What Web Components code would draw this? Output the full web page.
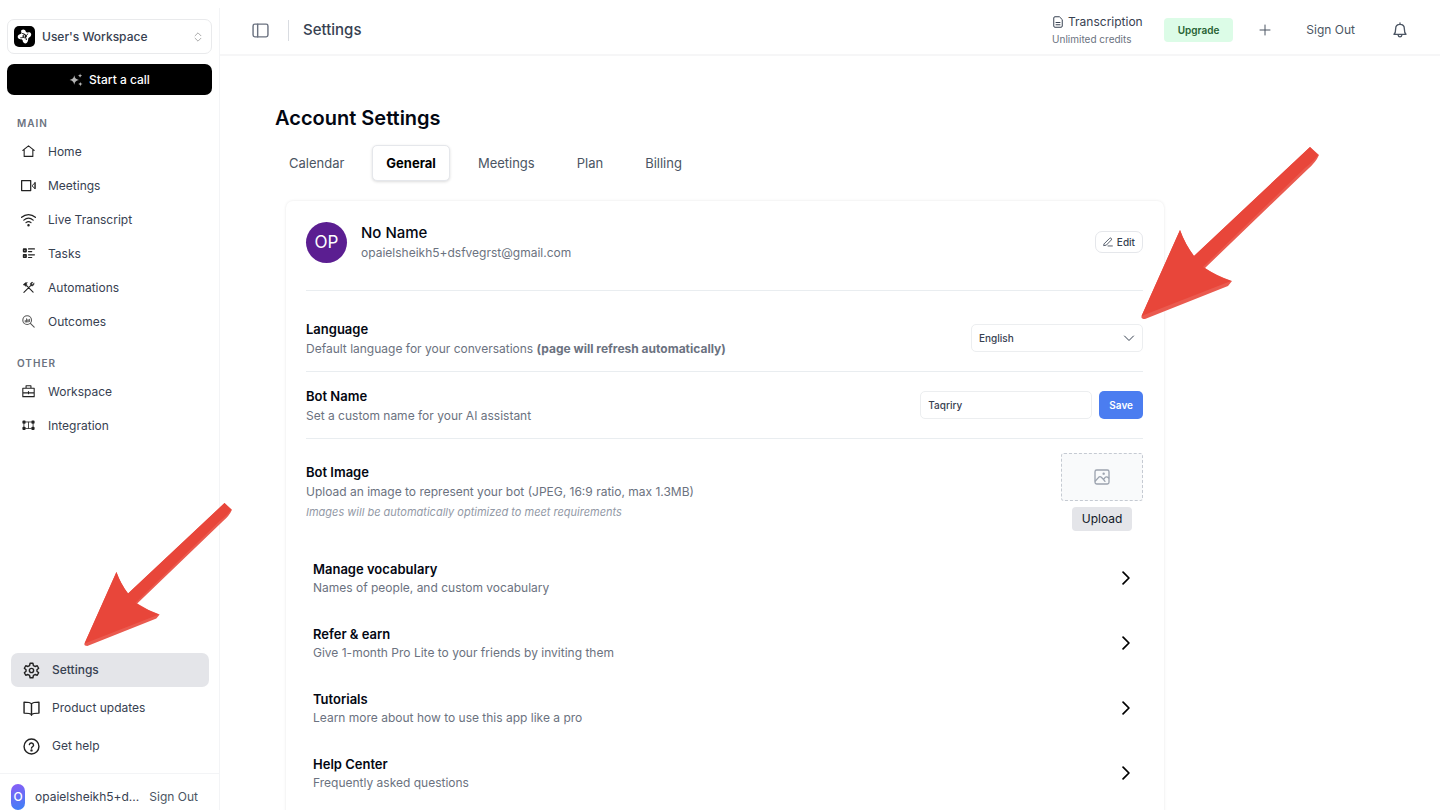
<!DOCTYPE html>
<html lang="en">
<head>
<meta charset="UTF-8">
<meta name="viewport" content="width=device-width, initial-scale=1.0">
<title>Settings</title>
<style>
    html, body {
        height: 100%;
        margin: 0;
    }
    body {
        --text: #374151;
        --muted: #6b7280;
        --heading: #030712;
        --line: #f1f2f4;
        font-family: Inter, "Liberation Sans", sans-serif;
        font-size: 12px;
        line-height: 20px;
        color: var(--text);
        background: #fff;
        overflow: hidden;
    }
</style>
</head>
<body>
<app-shell>
    <app-sidebar slot="sidebar"></app-sidebar>
    <top-bar slot="header"></top-bar>
    <account-settings></account-settings>
</app-shell>

<script>
const ICONS = {
    chevrons: '<path d="m5 9 7-7 7 7M5 15l7 7 7-7"/>',
    sparkles: '<g fill="currentColor" stroke="none"><path d="M9 4c1 5 3 7 8 8-5 1-7 3-8 8-1-5-3-7-8-8 5-1 7-3 8-8z"/><path d="M19 1c.4 2.300 1.200 3.200 3.500 3.600C20.200 5 19.400 6 19 8.200c-.4-2.200-1.200-3.200-3.500-3.600C17.800 4.200 18.600 3.300 19 1zM19.500 15c.4 2.500 1.400 3.500 4 4-2.600.5-3.600 1.500-4 4-.4-2.500-1.400-3.500-4-4 2.600-.5 3.600-1.500 4-4z"/></g>',
    home: '<path d="M1.500 10 12 1.500 22.500 10M4 8.500V21h16V8.500"/>',
    video: '<path d="M1 4h14.500v16H1z"/><path d="M18 12l4.500-4.500v9zM22.500 7v10" stroke-width="1.500"/>',
    wifi: '<path d="M1 8.500c6.500-6 15.500-6 22 0M4.500 13c4.500-4 10.500-4 15 0M8 17c2.500-2 5.500-2 8 0"/><circle cx="12" cy="21" r="1" fill="currentColor"/>',
    tasks: '<path d="M3 4h4.500v4.500H3zM3 14.500h4.500V19H3z" stroke-width="3"/><path d="M12 3.500h11M12 8.500h6M12 14.500h11M12 19.500h6"/>',
    tools: '<path d="m9 9 11.500 11.500M3.500 21 16 8.500"/><path d="M2.500 6.500 6.500 3h3.500L7.500 5.500 9.500 7.500 7 10 5 8zM22 4.500l-3 2.500-1.500-1.500L20 2.500c-3-.5-5 1.500-4.500 4l2 2.500c2.500.5 5-1.500 4.500-4.500z" fill="currentColor" stroke-width="1"/>',
    insight: '<circle cx="9.500" cy="9.500" r="8"/><path d="m15.500 15.500 7 7M6 10v3M8.500 7v6M11 9v4M13.500 8v4"/>',
    briefcase: '<path d="M1.500 6h21v15.500h-21zM7.500 6V1.500h9V6M1.500 14.500h21M12 12v4"/>',
    flow: '<g stroke-width="3.500"><path d="M2.500 4.500h2.500V7H2.500zM19 4.500h2.500V7H19zM2.500 16h2.500v2.500H2.500zM19 16h2.500v2.500H19z"/></g><path d="M7 5.500h10M7 17.500h10M3.500 9v5M20.500 9v5M12 6v11" stroke-width="1.500"/>',
    gear: '<circle cx="12" cy="12" r="3"/><path d="M10 1.800h4l.7 3.200 2.300 1.300 3.100-1 2 3.500-2.400 2.200v2l2.400 2.200-2 3.500-3.100-1-2.300 1.300-.7 3.200h-4L9.300 19 7 17.700l-3.100 1-2-3.500L4.300 13v-2L1.900 8.800l2-3.500 3.100 1L9.300 5z"/>',
    book: '<path d="M12 5.500C10.500 3.500 8 3 1.500 3v15.500c6 0 9 .3 10.500 2 1.500-1.700 4.500-2 10.500-2V3C16 3 13.500 3.500 12 5.500zM12 5.500v16"/>',
    help: '<circle cx="12" cy="12" r="10.500"/><path d="M9 9.300a3 3 0 0 1 5.900.8c0 2-2.900 2.400-2.900 4.200"/><circle cx="12" cy="17.500" r=".7" fill="currentColor"/>',
    panel: '<rect x="1.500" y="3" width="21" height="18" rx="2.500"/><path d="M8 3v18"/>',
    doc: '<path d="M14 1.500H6A2.500 2.500 0 0 0 3.500 4v16A2.500 2.500 0 0 0 6 22.500h12a2.500 2.500 0 0 0 2.500-2.500V8zM8 13h8M8 17.500h8"/>',
    plus: '<path d="M12 2v20M2 12h20"/>',
    bell: '<path d="M3 18.500h18c-2-1.800-2.500-4-2.500-8.500C18.500 6 16 3.500 12 3.500S5.500 6 5.500 10c0 4.500-.5 6.700-2.500 8.500zM12 3.500v-2M9 19c.3 2.200 1.300 3.300 3 3.300s2.700-1.100 3-3.300"/>',
    edit: '<path d="M3 16 15.500 3.500a2.500 2.500 0 0 1 4.500 3.500L8 19.500l-5.500 1zM12 21.500h10.500"/>',
    down: '<path d="m3 8 9 9 9-9"/>',
    right: '<path d="m7 2 10 10L7 22"/>',
    image: '<rect x="1.500" y="1.500" width="21" height="21" rx="2.500"/><path d="m2 18 5-5.500c1.500-1.500 2.500-1.500 4 0l3 3 1.500-1c1-3.500 4-3.500 6.500-1M14 15.500l2.500 3"/><circle cx="14.500" cy="7" r=".8" fill="currentColor"/>',
    logo: '<g fill="currentColor" stroke="none"><path d="M7 2c3-2 6-1 7 2 1 2 2 2 5 1 3 0 5 3 3 6-1 2-3 2-4 4 0 3-1 7-4 8-3 0-5-2-5-5-1-2-3-1-5-2-3-1-4-5-1-7 2-1 4-1 4-3 0-1-1-3 0-4z"/></g><g stroke="#000" stroke-width="1.500"><path d="M8 7c2 1 4 0 5 2M17 8c-1 2-2 3-4 3M15 17c0-2-2-3-1-5M6 14c2 0 4 0 5-2"/><circle cx="12" cy="11.500" r="2.500"/></g>'
};

class UiIcon extends HTMLElement {
    connectedCallback() {
        const size = this.getAttribute('size') || 14;
        const weight = this.getAttribute('weight') || 2;
        this.attachShadow({ mode: 'open' }).innerHTML = `
            <style>
                :host { display: inline-flex; flex: none; }
                svg { display: block; }
            </style>
            <svg width="${size}" height="${size}" viewBox="0 0 24 24" fill="none" stroke="currentColor"
                stroke-width="${weight}" stroke-linecap="round" stroke-linejoin="round" aria-hidden="true">
                ${ICONS[this.getAttribute('name')]}
            </svg>
        `;
    }
}
customElements.define('ui-icon', UiIcon);

// Red pointer, its tip is the bottom left corner of the box
class PointerArrow extends HTMLElement {
    connectedCallback() {
        this.attachShadow({ mode: 'open' }).innerHTML = `
            <style>
                :host { display: block; pointer-events: none; }
                svg { display: block; width: 100%; height: auto; }
            </style>
            <svg viewBox="0 0 178 172" aria-hidden="true">
                <path fill="#ea5a4f" d="M169 0 178 8Q175 15 167 22L64 121Q76 129 91 134L87 139 4 172Q-1 172 1 168L39 83Q44 97 53 109Z"/>
                <path fill="#e8463a" d="M169 0 177 8Q173 14 164 21L62 120Q75 129 90 134L3 168Q0 170 1 168L39 83Q44 97 53 109Z"/>
            </svg>
        `;
    }
}
customElements.define('pointer-arrow', PointerArrow);

class AppShell extends HTMLElement {
    constructor() {
        super();
        this.attachShadow({ mode: 'open' }).innerHTML = `
            <style>
                :host {
                    display: grid;
                    grid-template-columns: 220px 1fr;
                    height: 100vh;
                }
                .side { position: relative; z-index: 1; }
                main { min-width: 0; }
            </style>
            <div class="side"><slot name="sidebar"></slot></div>
            <main>
                <slot name="header"></slot>
                <slot></slot>
            </main>
        `;
    }
}
customElements.define('app-shell', AppShell);

class NavLink extends HTMLElement {
    connectedCallback() {
        const large = this.hasAttribute('large');
        this.attachShadow({ mode: 'open' }).innerHTML = `
            <style>
                :host { display: block; }
                a {
                    display: flex;
                    align-items: center;
                    gap: 12px;
                    height: 34px;
                    padding-left: 14px;
                    color: var(--text);
                    text-decoration: none;
                }
                .icon {
                    display: flex;
                    justify-content: center;
                    width: 15px;
                    color: #222;
                }
                :host(:not([large])) .icon { padding-bottom: 2px; }
                :host([icon="insight"]) .icon { color: #555; }
                :host([large]) a {
                    padding-left: 12px;
                    border-radius: 7px;
                }
                :host([large]) .icon { width: 17px; }
                :host([active]) a { background: #e4e5e9; font-weight: 500; }
            </style>
            <a href="#">
                <span class="icon"><ui-icon name="${this.getAttribute('icon')}" size="${this.getAttribute('size') || (large ? 17 : 13)}"></ui-icon></span>
                <span><slot></slot></span>
            </a>
        `;
    }
}
customElements.define('nav-link', NavLink);

class AppSidebar extends HTMLElement {
    constructor() {
        super();
        this.attachShadow({ mode: 'open' }).innerHTML = `
            <style>
                :host {
                    display: flex;
                    flex-direction: column;
                    box-sizing: border-box;
                    height: calc(100vh - 8px);
                    margin-top: 8px;
                    padding-top: 11px;
                    border-right: 1px solid #f3f4f6;
                }
                button { font: inherit; cursor: pointer; }
                .top {
                    display: flex;
                    flex-direction: column;
                    gap: 10px;
                    padding: 0 7px;
                }
                .workspace {
                    display: flex;
                    align-items: center;
                    gap: 7px;
                    height: 35px;
                    padding: 0 8px 0 6px;
                    border: 1px solid #e9eaec;
                    border-radius: 7px;
                    background: #fff;
                    color: var(--text);
                    font-weight: 500;
                }
                .workspace .name { flex: 1; text-align: left; }
                .workspace .caret { display: flex; color: #9a9a9a; }
                .logo {
                    display: flex;
                    padding: 3px;
                    border-radius: 5px;
                    background: #000;
                    color: #fff;
                }
                .call {
                    display: flex;
                    align-items: center;
                    justify-content: center;
                    gap: 6px;
                    height: 31px;
                    border: 0;
                    border-radius: 7px;
                    background: #000;
                    color: #fff;
                    font-weight: 500;
                }
                .call ui-icon { color: #b5b5b5; }
                h2 {
                    margin: 0;
                    padding-left: 10px;
                    font-size: 10px;
                    font-weight: 600;
                    line-height: 24px;
                    letter-spacing: 1px;
                    color: var(--muted);
                }
                nav { padding: 16px 7px 0; }
                .group + .group { padding-top: 12px; }
                .bottom {
                    display: flex;
                    flex-direction: column;
                    gap: 4px;
                    margin-top: auto;
                    padding: 0 10px 10px 11px;
                }
                .target { position: relative; }
                pointer-arrow {
                    position: absolute;
                    left: 73px;
                    bottom: calc(100% + 7px);
                    width: 148px;
                }
                footer {
                    display: flex;
                    align-items: center;
                    gap: 10px;
                    padding: 10px 11px 0;
                    border-top: 1px solid #f3f4f6;
                }
                .avatar {
                    width: 14px;
                    border-radius: 7px;
                    background: linear-gradient(160deg, #8b5cf6, #3b82f6);
                    color: #fff;
                    font-weight: 500;
                    line-height: 26px;
                    text-align: center;
                }
                .mail { flex: 1; white-space: nowrap; }
                .out {
                    padding: 0 10px 0 0;
                    border: 0;
                    background: none;
                    color: #4b5563;
                    white-space: nowrap;
                }
            </style>
            <div class="top">
                <button class="workspace" type="button">
                    <span class="logo"><ui-icon name="logo" size="15"></ui-icon></span>
                    <span class="name">User's Workspace</span>
                    <span class="caret"><ui-icon name="chevrons" size="10"></ui-icon></span>
                </button>
                <button class="call" type="button"><ui-icon name="sparkles"></ui-icon>Start a call</button>
            </div>
            <nav>
                <div class="group">
                    <h2>MAIN</h2>
                    <nav-link icon="home">Home</nav-link>
                    <nav-link icon="video" size="15">Meetings</nav-link>
                    <nav-link icon="wifi" size="15">Live Transcript</nav-link>
                    <nav-link icon="tasks">Tasks</nav-link>
                    <nav-link icon="tools">Automations</nav-link>
                    <nav-link icon="insight">Outcomes</nav-link>
                </div>
                <div class="group">
                    <h2>OTHER</h2>
                    <nav-link icon="briefcase">Workspace</nav-link>
                    <nav-link icon="flow">Integration</nav-link>
                </div>
            </nav>
            <div class="bottom">
                <div class="target">
                    <nav-link icon="gear" large active>Settings</nav-link>
                    <pointer-arrow></pointer-arrow>
                </div>
                <nav-link icon="book" large>Product updates</nav-link>
                <nav-link icon="help" large>Get help</nav-link>
            </div>
            <footer>
                <span class="avatar">O</span>
                <span class="mail">opaielsheikh5+d...</span>
                <button class="out" type="button">Sign Out</button>
            </footer>
        `;
    }
}
customElements.define('app-sidebar', AppSidebar);

class TopBar extends HTMLElement {
    constructor() {
        super();
        this.attachShadow({ mode: 'open' }).innerHTML = `
            <style>
                :host {
                    display: flex;
                    align-items: center;
                    box-sizing: border-box;
                    height: 56px;
                    padding: 6px 32px 0 32px;
                    border-bottom: 2px solid #f6f6f7;
                }
                button {
                    display: flex;
                    padding: 0;
                    border: 0;
                    background: none;
                    font: inherit;
                    color: #4b5563;
                    cursor: pointer;
                }
                .toggle { color: var(--muted); }
                .rule {
                    width: 1px;
                    height: 21px;
                    margin: 0 14px 0 19px;
                    background: #d9dce1;
                }
                h1 {
                    flex: 1;
                    margin: 0;
                    font-size: 15px;
                    font-weight: 500;
                }
                .credits { line-height: 18px; }
                .credits .line {
                    display: flex;
                    align-items: center;
                    gap: 4px;
                }
                .credits small {
                    display: block;
                    font-size: 10px;
                    line-height: 16px;
                    color: var(--muted);
                }
                .upgrade {
                    margin: 0 26px 0 21px;
                    padding: 2px 14px;
                    border-radius: 4px;
                    background: #dcfce7;
                    color: #276233;
                    font-size: 10px;
                    font-weight: 600;
                }
                .out { margin: 0 37px 0 35px; }
            </style>
            <button class="toggle" type="button" aria-label="Toggle sidebar"><ui-icon name="panel" size="17"></ui-icon></button>
            <span class="rule"></span>
            <h1>Settings</h1>
            <div class="credits">
                <div class="line"><ui-icon name="doc" size="12"></ui-icon>Transcription</div>
                <small>Unlimited credits</small>
            </div>
            <button class="upgrade" type="button">Upgrade</button>
            <button type="button" aria-label="Add"><ui-icon name="plus" size="12"></ui-icon></button>
            <button class="out" type="button">Sign Out</button>
            <button type="button" aria-label="Notifications"><ui-icon name="bell" size="16"></ui-icon></button>
        `;
    }
}
customElements.define('top-bar', TopBar);

class SettingRow extends HTMLElement {
    constructor() {
        super();
        this.attachShadow({ mode: 'open' }).innerHTML = `
            <style>
                :host {
                    display: flex;
                    align-items: center;
                    justify-content: space-between;
                    gap: 16px;
                    padding: 14px 0 12px;
                    border-top: 1px solid #e9edf0;
                }
                .text { color: var(--muted); }
                ::slotted([slot="title"]) {
                    display: block;
                    margin: 0;
                    font-size: 13px;
                    font-weight: 600;
                    color: var(--heading);
                }
                ::slotted([slot="note"]) {
                    display: block;
                    font-size: 11px;
                    color: #9299a6;
                }
            </style>
            <div class="text">
                <slot name="title"></slot>
                <slot></slot>
                <slot name="note"></slot>
            </div>
            <slot name="control"></slot>
        `;
    }
}
customElements.define('setting-row', SettingRow);

class SettingLink extends HTMLElement {
    connectedCallback() {
        this.attachShadow({ mode: 'open' }).innerHTML = `
            <style>
                :host { display: block; }
                a {
                    display: flex;
                    align-items: center;
                    justify-content: space-between;
                    height: 65px;
                    padding: 0 10px 0 7px;
                    color: var(--muted);
                    line-height: 18px;
                    text-decoration: none;
                }
                strong {
                    display: block;
                    font-size: 13px;
                    font-weight: 600;
                    line-height: 20px;
                    color: var(--heading);
                }
                ui-icon { color: #000; }
            </style>
            <a href="#">
                <span><strong>${this.getAttribute('heading')}</strong><slot></slot></span>
                <ui-icon name="right" weight="3"></ui-icon>
            </a>
        `;
    }
}
customElements.define('setting-link', SettingLink);

class AccountSettings extends HTMLElement {
    constructor() {
        super();
        this.attachShadow({ mode: 'open' }).innerHTML = `
            <style>
                :host {
                    display: block;
                    max-width: 889px;
                    padding: 48px 24px 0 55px;
                }
                h2 {
                    margin: 0 0 13px;
                    font-size: 20px;
                    font-weight: 600;
                    line-height: 28px;
                    color: var(--heading);
                }
                button, input, select { font: inherit; }
                button { cursor: pointer; }
                .tabs {
                    display: flex;
                    gap: 14px;
                    margin-bottom: 20px;
                }
                .tabs button {
                    padding: 7px 13px;
                    border: 1px solid transparent;
                    border-radius: 5px;
                    background: none;
                    color: #4b5563;
                    font-size: 13px;
                }
                .tabs button[aria-selected="true"] {
                    border-color: #e5e7eb;
                    background: #fff;
                    box-shadow: 0 1px 3px rgba(0, 0, 0, 0.14);
                    color: #000;
                    font-weight: 700;
                }
                .card {
                    margin-left: 11px;
                    padding: 20px 21px 20px 20px;
                    border-radius: 7px;
                    box-shadow: 0 0 3px rgba(0, 0, 0, 0.1);
                }
                .profile {
                    display: flex;
                    align-items: center;
                    gap: 14px;
                    margin-bottom: 27px;
                }
                .avatar {
                    width: 41px;
                    border-radius: 50%;
                    background: #5b1e91;
                    color: #fff;
                    font-size: 17px;
                    line-height: 41px;
                    text-align: center;
                }
                .who {
                    flex: 1;
                    padding-top: 2px;
                    color: var(--muted);
                }
                .who h3 {
                    margin: 0;
                    font-size: 15px;
                    font-weight: 500;
                    color: var(--heading);
                }
                .edit {
                    display: flex;
                    align-items: center;
                    gap: 4px;
                    padding: 0 7px;
                    border: 1px solid #e5e7eb;
                    border-radius: 7px;
                    background: #fff;
                    color: var(--text);
                    font-size: 10px;
                    font-weight: 500;
                }
                .language { padding-top: 28px; }
                .picker {
                    position: relative;
                    display: flex;
                    align-items: center;
                    margin-bottom: 2px;
                }
                select, input {
                    box-sizing: border-box;
                    width: 172px;
                    height: 28px;
                    padding: 0 7px;
                    border: 1px solid #eceef0;
                    border-radius: 5px;
                    background: #fff;
                    color: var(--text);
                    font-size: 10px;
                    font-weight: 500;
                    appearance: none;
                }
                .picker ui-icon {
                    position: absolute;
                    right: 8px;
                    pointer-events: none;
                }
                pointer-arrow {
                    position: absolute;
                    left: calc(100% - 2px);
                    bottom: calc(100% + 5px);
                    width: 178px;
                }
                form {
                    display: flex;
                    gap: 7px;
                    margin: 0 0 2px;
                }
                .save {
                    padding: 0 10px;
                    border: 0;
                    border-radius: 5px;
                    background: #4b7df0;
                    color: #fff;
                    font-size: 10px;
                    font-weight: 600;
                }
                .image {
                    display: flex;
                    flex-direction: column;
                    align-items: center;
                    gap: 6px;
                }
                .drop {
                    display: flex;
                    align-items: center;
                    justify-content: center;
                    box-sizing: border-box;
                    width: 82px;
                    height: 48px;
                    border: 1px dashed #c5cad2;
                    border-radius: 3px;
                    background: #f9fafb;
                    color: #9ca3af;
                }
                .upload {
                    height: 24px;
                    padding: 0 10px;
                    border: 0;
                    border-radius: 4px;
                    background: #e4e5e9;
                    color: #111827;
                }
                .links { padding-top: 2px; }
            </style>
            <h2>Account Settings</h2>
            <div class="tabs" role="tablist">
                <button type="button" role="tab">Calendar</button>
                <button type="button" role="tab" aria-selected="true">General</button>
                <button type="button" role="tab">Meetings</button>
                <button type="button" role="tab">Plan</button>
                <button type="button" role="tab">Billing</button>
            </div>
            <section class="card">
                <div class="profile">
                    <span class="avatar">OP</span>
                    <div class="who">
                        <h3>No Name</h3>
                        opaielsheikh5+dsfvegrst@gmail.com
                    </div>
                    <button class="edit" type="button"><ui-icon name="edit" size="10"></ui-icon>Edit</button>
                </div>
                <setting-row class="language">
                    <label slot="title" for="language">Language</label>
                    Default language for your conversations <b>(page will refresh automatically)</b>
                    <div slot="control" class="picker">
                        <select id="language"><option>English</option></select>
                        <ui-icon name="down" size="12"></ui-icon>
                        <pointer-arrow></pointer-arrow>
                    </div>
                </setting-row>
                <setting-row>
                    <label slot="title" for="bot-name">Bot Name</label>
                    Set a custom name for your AI assistant
                    <form slot="control">
                        <input id="bot-name" type="text" value="Taqriry">
                        <button class="save" type="button">Save</button>
                    </form>
                </setting-row>
                <setting-row>
                    <h3 slot="title">Bot Image</h3>
                    Upload an image to represent your bot (JPEG, 16:9 ratio, max 1.3MB)
                    <em slot="note">Images will be automatically optimized to meet requirements</em>
                    <div slot="control" class="image">
                        <span class="drop"><ui-icon name="image" size="16"></ui-icon></span>
                        <button class="upload" type="button">Upload</button>
                    </div>
                </setting-row>
                <div class="links">
                    <setting-link heading="Manage vocabulary">Names of people, and custom vocabulary</setting-link>
                    <setting-link heading="Refer &amp; earn">Give 1-month Pro Lite to your friends by inviting them</setting-link>
                    <setting-link heading="Tutorials">Learn more about how to use this app like a pro</setting-link>
                    <setting-link heading="Help Center">Frequently asked questions</setting-link>
                </div>
            </section>
        `;
    }
}
customElements.define('account-settings', AccountSettings);
</script>
</body>
</html>
